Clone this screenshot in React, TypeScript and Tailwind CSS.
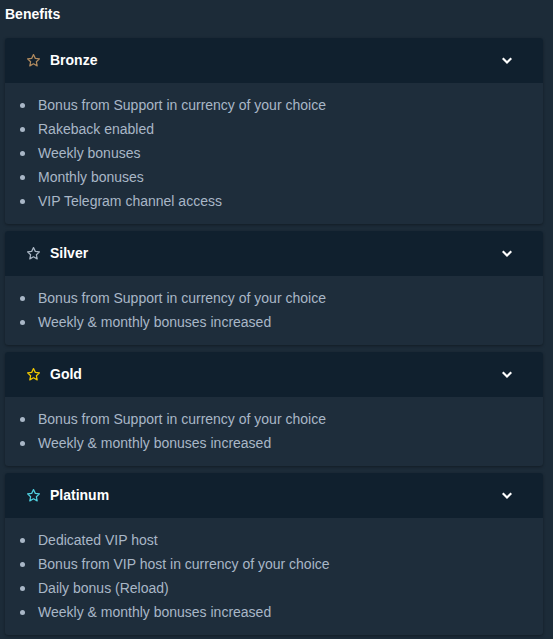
import React from 'react';

interface Tier {
  name: string;
  starColor: string;
  items: string[];
}

const tiers: Tier[] = [
  {
    name: 'Bronze',
    starColor: '#b08a5e',
    items: [
      'Bonus from Support in currency of your choice',
      'Rakeback enabled',
      'Weekly bonuses',
      'Monthly bonuses',
      'VIP Telegram channel access',
    ],
  },
  {
    name: 'Silver',
    starColor: '#aab6c4',
    items: ['Bonus from Support in currency of your choice', 'Weekly & monthly bonuses increased'],
  },
  {
    name: 'Gold',
    starColor: '#f0c800',
    items: ['Bonus from Support in currency of your choice', 'Weekly & monthly bonuses increased'],
  },
  {
    name: 'Platinum',
    starColor: '#4fd0e0',
    items: [
      'Dedicated VIP host',
      'Bonus from VIP host in currency of your choice',
      'Daily bonus (Reload)',
      'Weekly & monthly bonuses increased',
    ],
  },
];

const Star: React.FC<{ color: string }> = ({ color }) => (
  <svg width="15" height="15" viewBox="0 0 24 24" fill="none" stroke={color} strokeWidth="2" strokeLinejoin="round">
    <path d="M12 2.5l2.9 6.1 6.6.8-4.9 4.6 1.3 6.6L12 17.3l-5.9 3.3 1.3-6.6-4.9-4.6 6.6-.8z" />
  </svg>
);

const Chevron: React.FC = () => (
  <svg width="10" height="8" viewBox="0 0 10 8" fill="none" stroke="white" strokeWidth="2.2" strokeLinecap="square">
    <path d="M1.5 2l3.5 3.5L8.5 2" />
  </svg>
);

const TierCard: React.FC<{ tier: Tier }> = ({ tier }) => (
  <div className="rounded-[3px] overflow-hidden bg-[#1e2d3b] shadow-[0_1px_3px_rgba(0,0,0,0.35)]">
    <div className="h-[45px] bg-[#10202e] flex items-center pl-[21px] pr-[31px]">
      <Star color={tier.starColor} />
      <span className="ml-[9px] text-[14px] font-bold text-white">{tier.name}</span>
      <span className="ml-auto flex">
        <Chevron />
      </span>
    </div>
    <ul className="pt-[10px] pb-[11px]">
      {tier.items.map((item) => (
        <li key={item} className="h-6 flex items-center text-[14px] text-[#a9b7c7]">
          <span className="ml-[15px] w-[5px] h-[5px] rounded-full bg-[#a9b7c7]" />
          <span className="ml-[13px]">{item}</span>
        </li>
      ))}
    </ul>
  </div>
);

export default function App() {
  return (
    <div
      className="min-h-screen bg-[#1c2b38] pl-[5px] pr-[10px] pt-[4px] pb-4"
      style={{ fontFamily: '"Liberation Sans", Arial, sans-serif' }}
    >
      <h2 className="text-[14px] font-bold text-white h-[20px] leading-[20px]">Benefits</h2>
      <div className="mt-[14px] flex flex-col gap-[7px]">
        {tiers.map((t) => (
          <TierCard key={t.name} tier={t} />
        ))}
      </div>
    </div>
  );
}
